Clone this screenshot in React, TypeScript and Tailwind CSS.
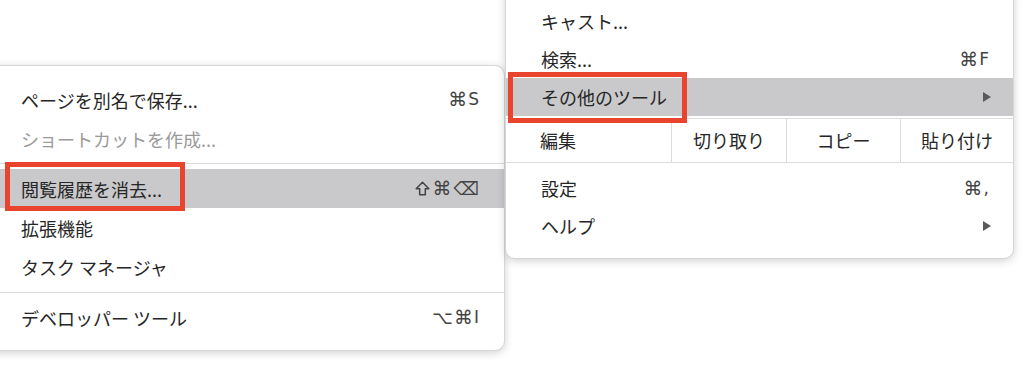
import React from "react";

const jp = "font-['Noto_Sans_CJK_JP','Noto_Sans',sans-serif]";
const sym = "font-['DejaVu_Sans','Noto_Sans',sans-serif]";

function Cmd() {
  return <span className="text-[19px] leading-none">⌘</span>;
}

function Shortcut({ keys }: { keys: string }) {
  if (keys === "⇧⌘⌫") {
    return (
      <span className={`${sym} flex items-center gap-[2px] leading-none text-[#444444]`}>
        <svg width="15" height="15" viewBox="0 0 15 15" className="mr-[1px]">
          <path
            d="M7.5 1.2 L13.8 7.8 H10.3 V13.8 H4.7 V7.8 H1.2 Z"
            fill="none"
            stroke="#444444"
            strokeWidth="1.5"
            strokeLinejoin="round"
          />
        </svg>
        <Cmd />
        <span className="text-[18px] leading-none">⌫</span>
      </span>
    );
  }
  const rest = keys.replace("⌘", "");
  const pre = keys.startsWith("⌥") ? "⌥" : "";
  const post = pre ? rest.slice(1) : rest;
  return (
    <span className={`${sym} flex items-center gap-[1px] text-[17px] leading-none text-[#444444]`}>
      {pre && <span className="text-[18px] leading-none">{pre}</span>}
      <Cmd />
      <span className="leading-none">{post}</span>
    </span>
  );
}

function Row({
  label,
  shortcut,
  arrow,
  disabled,
  highlight,
  pl,
  pr,
  h,
}: {
  label: string;
  shortcut?: string;
  arrow?: boolean;
  disabled?: boolean;
  highlight?: boolean;
  pl: string;
  pr: string;
  h: string;
}) {
  return (
    <div
      className={`flex items-center justify-between ${h} ${pl} ${pr} ${
        highlight ? "bg-[#c9c9cb]" : ""
      }`}
    >
      <span
        className={`${jp} text-[18px] leading-none ${
          disabled ? "text-[#9a9a9a]" : "text-[#262626]"
        }`}
      >
        {label}
      </span>
      {shortcut && <Shortcut keys={shortcut} />}
      {arrow && (
        <svg width="8" height="10" viewBox="0 0 8 10" className="mr-[-2px]">
          <path d="M0 0 L8 5 L0 10 Z" fill="#5a5a5a" />
        </svg>
      )}
    </div>
  );
}

function Sep({ h }: { h: string }) {
  return (
    <div className={`flex items-center ${h}`}>
      <div className="h-px w-full bg-[#dcdcdc]" />
    </div>
  );
}

function LeftMenu() {
  const p = { pl: "pl-[40px]", pr: "pr-[25px]", h: "h-[39px]" };
  return (
    <div className="mt-[65px] ml-[-20px] w-[525px] shrink-0 rounded-[10px] bg-white pt-[14px] pb-[13px] border border-[#d6d6d6] shadow-[0_2px_8px_rgba(0,0,0,0.18)]">
      <Row label="ページを別名で保存..." shortcut="⌘S" {...p} />
      <Row label="ショートカットを作成..." disabled {...p} />
      <Sep h="h-[11px]" />
      <Row label="閲覧履歴を消去..." shortcut="⇧⌘⌫" highlight {...p} />
      <Row label="拡張機能" {...p} />
      <Row label="タスク マネージャ" {...p} />
      <Sep h="h-[12px]" />
      <Row label="デベロッパー ツール" shortcut="⌥⌘I" {...p} />
    </div>
  );
}

function RightMenu() {
  const p = { pl: "pl-[35px]", pr: "pr-[24px]", h: "h-[38px]" };
  return (
    <div className="mt-[-14px] w-[509px] shrink-0 rounded-[10px] bg-white pt-[15px] pb-[13px] border border-[#d6d6d6] shadow-[0_2px_8px_rgba(0,0,0,0.18)]">
      <Row label="キャスト..." {...p} />
      <Row label="検索..." shortcut="⌘F" {...p} />
      <Row label="その他のツール" arrow highlight {...p} />
      <div className="mt-[2px] flex h-[45px] border-y border-[#dcdcdc]">
        <div className={`${jp} flex w-[165px] items-center pl-[34px] text-[18px] text-[#262626]`}>
          編集
        </div>
        <div className={`${jp} flex w-[115px] items-center justify-center border-l border-[#dcdcdc] text-[18px] text-[#262626]`}>
          切り取り
        </div>
        <div className={`${jp} flex w-[114px] items-center justify-center border-l border-[#dcdcdc] text-[18px] text-[#262626]`}>
          コピー
        </div>
        <div className={`${jp} flex flex-1 items-center justify-center border-l border-[#dcdcdc] text-[18px] text-[#262626]`}>
          貼り付け
        </div>
      </div>
      <div className="h-[6px]" />
      <Row label="設定" shortcut="⌘," {...p} />
      <Row label="ヘルプ" arrow {...p} />
    </div>
  );
}

export default function App() {
  return (
    <div className="relative flex h-[390px] w-[1024px] items-start overflow-hidden bg-white">
      <LeftMenu />
      <RightMenu />
      <div className="pointer-events-none absolute left-[5px] top-[162px] h-[49px] w-[180px] border-[5px] border-[#e9452e]" />
      <div className="pointer-events-none absolute left-[508px] top-[72px] h-[51px] w-[179px] border-[5px] border-[#e9452e]" />
    </div>
  );
}
